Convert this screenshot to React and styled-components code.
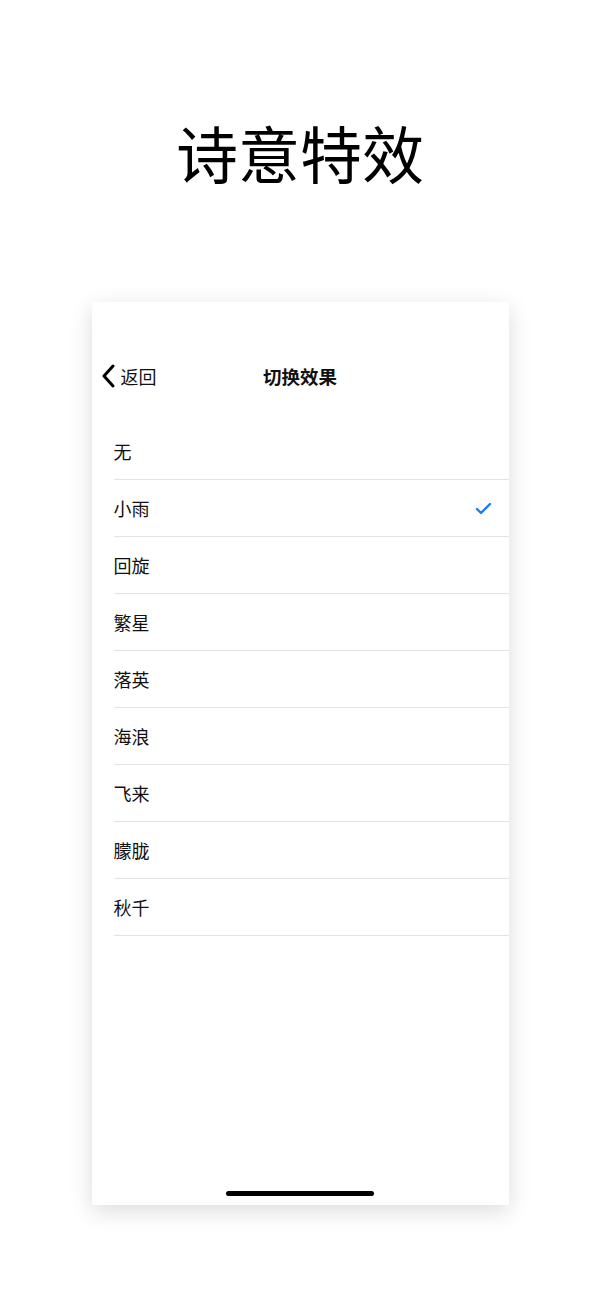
import React from 'react'
import styled, { createGlobalStyle } from 'styled-components'

const GlobalStyle = createGlobalStyle`
  body {
    margin: 0;
    background: #ffffff;
    font-family: "Noto Sans CJK SC", "Noto Sans", sans-serif;
  }
`

const effects = ['无', '小雨', '回旋', '繁星', '落英', '海浪', '飞来', '朦胧', '秋千']

const App = () => {
  const selected = '小雨'
  return (
    <Page>
      <GlobalStyle />
      <Headline>诗意特效</Headline>
      <Phone>
        <NavBar>
          <BackButton>
            <svg width="16" height="24" viewBox="0 0 16 24">
              <path d="M12 2 L3 12 L12 22" fill="none" stroke="#000" strokeWidth="3" strokeLinecap="round" strokeLinejoin="round" />
            </svg>
            <span>返回</span>
          </BackButton>
          <NavTitle>切换效果</NavTitle>
        </NavBar>
        <List>
          {effects.map(name => (
            <Row key={name}>
              <RowLabel>{name}</RowLabel>
              {name === selected && (
                <svg width="17" height="13" viewBox="0 0 17 13">
                  <path d="M2 7 L6 11 L15 2" fill="none" stroke="#1a7cf4" strokeWidth="2.4" strokeLinecap="round" strokeLinejoin="round" />
                </svg>
              )}
            </Row>
          ))}
        </List>
        <HomeBar />
      </Phone>
    </Page>
  )
}

export default App

const Page = styled.div`
  width: 600px;
  height: 1299px;
  display: flex;
  flex-direction: column;
  align-items: center;
`
const Headline = styled.h1`
  margin: 0;
  padding-top: 110px;
  height: 302px;
  flex-shrink: 0;
  box-sizing: border-box;
  font-family: "Noto Sans CJK SC", serif;
  font-weight: 400;
  font-size: 62px;
  line-height: 84px;
  color: #000;
`
const Phone = styled.div`
  width: 417px;
  height: 903px;
  flex-shrink: 0;
  background: #fff;
  box-shadow: 0 6px 22px rgba(0, 0, 0, 0.14);
  display: flex;
  flex-direction: column;
  box-sizing: border-box;
  padding-top: 52px;
`
const NavBar = styled.div`
  height: 44px;
  position: relative;
  display: flex;
  align-items: center;
  justify-content: center;
`
const BackButton = styled.div`
  position: absolute;
  left: 9px;
  top: 0;
  bottom: 0;
  display: flex;
  align-items: center;
  gap: 4px;
  font-size: 18px;
  color: #111;
`
const NavTitle = styled.div`
  font-size: 18.5px;
  font-weight: 600;
  color: #111;
`
const List = styled.div`
  flex: 1;
  margin-top: 25px;
  padding-left: 22px;
`
const Row = styled.div`
  height: 56px;
  border-bottom: 1px solid #e3e3e3;
  display: flex;
  align-items: center;
  justify-content: space-between;
  padding-right: 17px;
`
const RowLabel = styled.span`
  font-size: 18px;
  color: #111;
`
const HomeBar = styled.div`
  width: 148px;
  height: 5px;
  border-radius: 3px;
  background: #000;
  align-self: center;
  margin-bottom: 9px;
`
